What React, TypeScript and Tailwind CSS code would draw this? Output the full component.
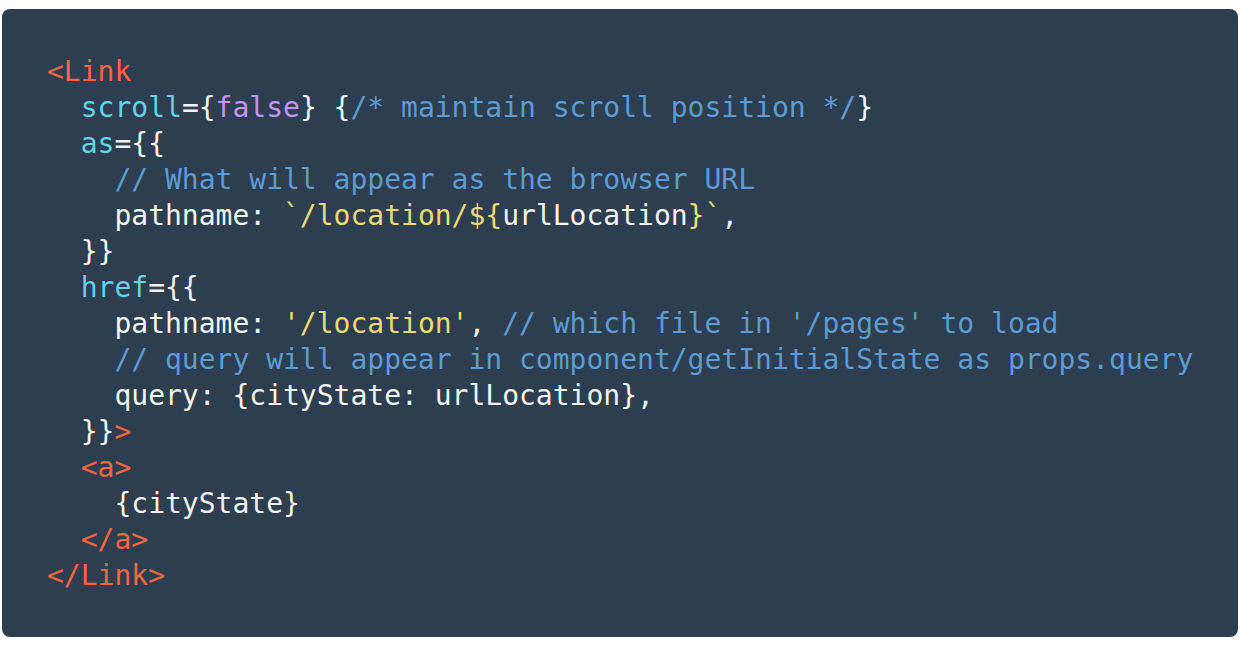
const T = "text-[#fb6540]";
const A = "text-[#62d3e8]";
const P = "text-[#c594f0]";
const C = "text-[#5d9bd3]";
const S = "text-[#ecd96f]";

export default function App() {
  return (
    <div className="min-h-[646px] bg-white px-[2px] pt-[9px]">
      <pre
        className="w-[1236px] rounded-lg bg-[#2c3e50] px-[45px] pt-[45px] pb-[43px] text-[28px] leading-[36px] text-[#f4f4f2]"
        style={{ fontFamily: '"DejaVu Sans Mono", monospace' }}
      >
        <span className={T}>{"<Link"}</span>
        {"\n  "}
        <span className={A}>scroll</span>={"{"}
        <span className={P}>false</span>
        {"} {"}
        <span className={C}>{"/* maintain scroll position */"}</span>
        {"}\n  "}
        <span className={A}>as</span>
        {"={{\n    "}
        <span className={C}>// What will appear as the browser URL</span>
        {"\n    pathname: "}
        <span className={S}>{"`/location/${"}</span>
        urlLocation
        <span className={S}>{"}`"}</span>
        {",\n  }}\n  "}
        <span className={A}>href</span>
        {"={{\n    pathname: "}
        <span className={S}>'/location'</span>
        {", "}
        <span className={C}>// which file in '/pages' to load</span>
        {"\n    "}
        <span className={C}>// query will appear in component/getInitialState as props.query</span>
        {"\n    query: {cityState: urlLocation},\n  }}"}
        <span className={T}>{">"}</span>
        {"\n  "}
        <span className={T}>{"<a>"}</span>
        {"\n    {cityState}\n  "}
        <span className={T}>{"</a>"}</span>
        {"\n"}
        <span className={T}>{"</Link>"}</span>
      </pre>
    </div>
  );
}
